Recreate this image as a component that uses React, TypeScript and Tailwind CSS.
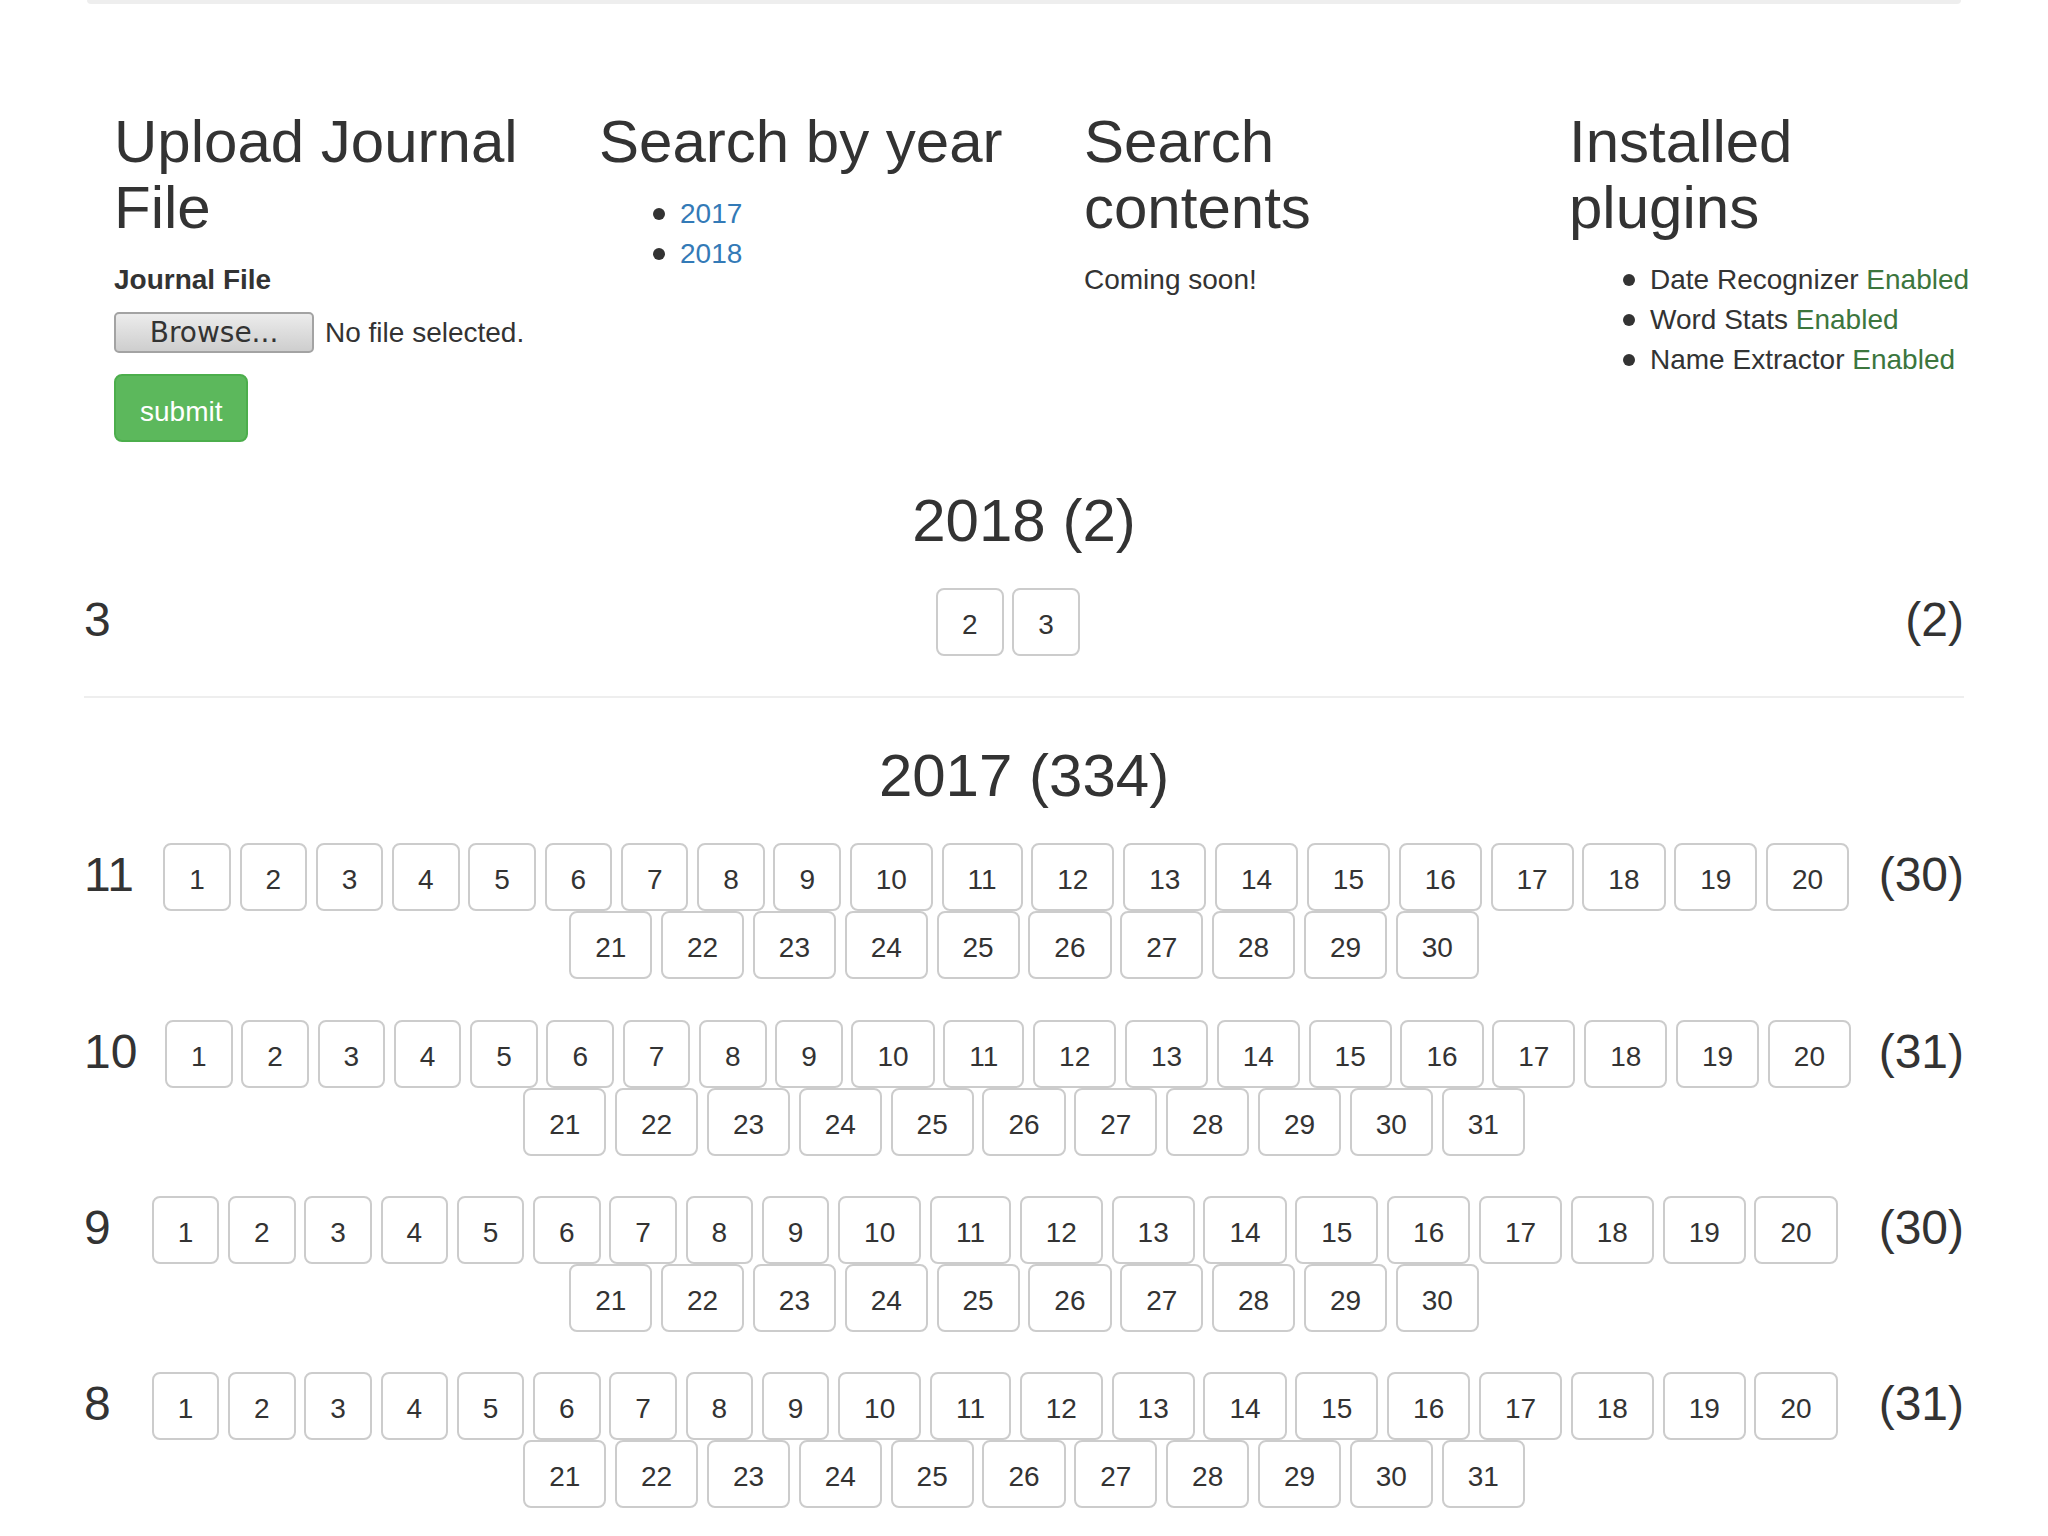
import React from "react";

interface MonthData {
  month: number;
  days: number[];
}

interface YearData {
  year: number;
  total: number;
  months: MonthData[];
}

const range = (from: number, to: number) =>
  Array.from({ length: to - from + 1 }, (_, i) => from + i);

// only the months that fit on the first screen are listed here
const years: YearData[] = [
  { year: 2018, total: 2, months: [{ month: 3, days: [2, 3] }] },
  {
    year: 2017,
    total: 334,
    months: [
      { month: 11, days: range(1, 30) },
      { month: 10, days: range(1, 31) },
      { month: 9, days: range(1, 30) },
      { month: 8, days: range(1, 31) },
    ],
  },
];

const plugins = ["Date Recognizer", "Word Stats", "Name Extractor"];

function Bullet() {
  return <span className="h-[12px] w-[12px] shrink-0 rounded-full bg-[#333333]" />;
}

function DayButton({ day }: { day: number }) {
  return (
    <a
      href="#"
      className="block rounded-[8px] border-2 border-[#cccccc] bg-white px-[24px] pt-[15px] pb-[9px] text-[28px] leading-[40px] text-[#333333]"
    >
      {day}
    </a>
  );
}

function MonthRow({ month, days }: MonthData) {
  const firstLine = days.slice(0, 20);
  const secondLine = days.slice(20);

  return (
    <div className="mb-[40.3px]">
      <div className="flex items-start">
        <h3 className="mt-[6px] text-[48px] leading-[52.8px] font-normal">{month}</h3>
        <div className="flex flex-1 justify-center gap-[8.7px]">
          {firstLine.map((d) => (
            <DayButton key={d} day={d} />
          ))}
        </div>
        <h3 className="mt-[6px] text-[48px] leading-[52.8px] font-normal">
          ({days.length})
        </h3>
      </div>
      {secondLine.length > 0 && (
        <div className="flex justify-center gap-[8.7px]">
          {secondLine.map((d) => (
            <DayButton key={d} day={d} />
          ))}
        </div>
      )}
    </div>
  );
}

function YearSection({ year, total, months }: YearData) {
  return (
    <section>
      <h2 className="mt-[45px] mb-[34px] text-center text-[60px] leading-[66px] font-normal">
        {year} ({total})
      </h2>
      {months.map((m) => (
        <MonthRow key={m.month} month={m.month} days={m.days} />
      ))}
      <hr className="border-t-2 border-[#eeeeee]" />
    </section>
  );
}

export default function App() {
  return (
    <div className="min-h-screen bg-white font-['Liberation_Sans',Arial,Helvetica,sans-serif] text-[#333333]">
      <div className="mx-auto w-[1880px]">
        {/* bottom edge of the header panel */}
        <div className="mx-[3px] h-[4px] rounded-b-[8px] bg-[#eeeeee]" />

        <div className="ml-[30px] flex pt-[105px] pb-[1px]">
          {/* upload */}
          <div className="w-[485px] shrink-0 pr-[60px]">
            <h2 className="mb-[19px] text-[60px] leading-[66px] font-normal">
              Upload Journal File
            </h2>
            <form onSubmit={(e) => e.preventDefault()}>
              <label className="block text-[28px] leading-[40px] font-bold">Journal File</label>
              <div className="mt-[12px] flex h-[41px] items-center gap-[11px]">
                <button
                  type="button"
                  className="flex h-[41px] w-[200px] items-center justify-center rounded-[5px] border-2 border-[#a3a3a3] bg-linear-to-b from-[#ececec] to-[#cecece] font-['DejaVu_Sans',sans-serif] text-[28px] leading-[41px] text-[#333333]"
                >
                  Browse...
                </button>
                <span className="text-[28px] leading-[40px]">No file selected.</span>
              </div>
              <button
                type="submit"
                className="mt-[21px] block rounded-[8px] border-2 border-[#4cae4c] bg-[#5cb85c] px-[24px] pt-[15.5px] pb-[8.5px] text-[28px] leading-[40px] text-white"
              >
                submit
              </button>
            </form>
          </div>

          {/* years */}
          <div className="w-[485px] shrink-0 pr-[60px]">
            <h2 className="mb-[19px] text-[60px] leading-[66px] font-normal">Search by year</h2>
            <ul className="pl-[54px]">
              {["2017", "2018"].map((y) => (
                <li key={y} className="flex items-center gap-[15px] text-[28px] leading-[40px]">
                  <Bullet />
                  <a href="#" className="text-[#337ab7]">
                    {y}
                  </a>
                </li>
              ))}
            </ul>
          </div>

          {/* contents */}
          <div className="w-[485px] shrink-0 pr-[60px]">
            <h2 className="mb-[19px] text-[60px] leading-[66px] font-normal">Search contents</h2>
            <p className="text-[28px] leading-[40px]">Coming soon!</p>
          </div>

          {/* plugins */}
          <div className="w-[395px] shrink-0">
            <h2 className="mb-[19px] text-[60px] leading-[66px] font-normal">Installed plugins</h2>
            <ul className="pl-[54px]">
              {plugins.map((p) => (
                <li
                  key={p}
                  className="flex items-center gap-[15px] whitespace-nowrap text-[28px] leading-[40px]"
                >
                  <Bullet />
                  <span>
                    {p} <span className="text-[#3c763d]">Enabled</span>
                  </span>
                </li>
              ))}
            </ul>
          </div>
        </div>

        {years.map((y) => (
          <YearSection key={y.year} year={y.year} total={y.total} months={y.months} />
        ))}
      </div>
    </div>
  );
}
